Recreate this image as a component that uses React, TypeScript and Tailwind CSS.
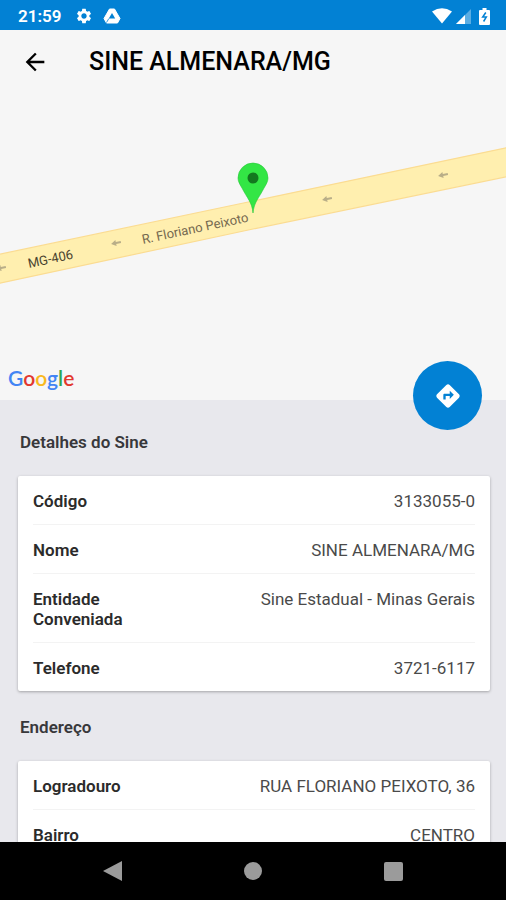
import { MdArrowBack, MdDirections, MdSettings } from "react-icons/md";

type Detail = { label: string; value: string };

const detalhes: Detail[] = [
  { label: "Código", value: "3133055-0" },
  { label: "Nome", value: "SINE ALMENARA/MG" },
  { label: "Entidade Conveniada", value: "Sine Estadual - Minas Gerais" },
  { label: "Telefone", value: "3721-6117" },
];

const endereco: Detail[] = [
  { label: "Logradouro", value: "RUA FLORIANO PEIXOTO, 36" },
  { label: "Bairro", value: "CENTRO" },
];

const roadArrows = [
  { x: 1, y: 174 },
  { x: 116, y: 149 },
  { x: 327, y: 105 },
  { x: 443, y: 81 },
];

function StatusBar() {
  return (
    <div className="flex h-[30px] shrink-0 items-center bg-[#0281d4] px-4 pt-0.5 text-white">
      <span className="ml-0.5 text-[17px] leading-5 font-semibold">21:59</span>
      <MdSettings className="ml-3.5 h-[18px] w-[18px]" />
      <svg viewBox="0 0 18 16" className="ml-2.5 h-4 w-[18px]" aria-hidden="true">
        <path
          d="M6.500 1h5l5.500 9.500-2.500 4.500h-11L1 10.500z"
          fill="currentColor"
          stroke="currentColor"
          strokeLinejoin="round"
        />
        <path d="M9 5l3.200 5.600H5.800z" fill="#0281d4" />
        <path d="M3.500 14.500l2.300-3.900" stroke="#0281d4" strokeWidth="0.8" />
      </svg>
      <div className="ml-auto flex items-center gap-1">
        <svg viewBox="0 0 20 16" className="h-4 w-5" aria-hidden="true">
          <path d="M0 3.500Q10-3 20 3.500L10 15.500z" fill="currentColor" />
        </svg>
        <svg viewBox="0 0 15 15" className="h-[15px] w-[15px]" aria-hidden="true">
          <path d="M15 0v15H0z" fill="currentColor" opacity="0.35" />
          <path d="M9 6v9H0z" fill="currentColor" />
        </svg>
        <svg viewBox="0 0 11 17" className="ml-1 h-[17px] w-[11px]" aria-hidden="true">
          <path
            d="M3.500 0h4v2H10a1 1 0 0 1 1 1v13a1 1 0 0 1-1 1H1a1 1 0 0 1-1-1V3a1 1 0 0 1 1-1h2.500z"
            fill="currentColor"
          />
          <path
            d="M6.800 4.500L3.700 9h3.600L4.600 13.500"
            fill="none"
            stroke="#0281d4"
            strokeWidth="1.5"
          />
        </svg>
      </div>
    </div>
  );
}

function MapView() {
  return (
    <div className="relative h-[306px] shrink-0 bg-[#f6f6f6]">
      <svg
        viewBox="0 0 506 306"
        preserveAspectRatio="xMidYMid slice"
        className="h-full w-full"
        role="img"
        aria-label="Mapa"
      >
        <path
          d="M-4 161L253 107 510 53V82L253 135-4 190z"
          fill="#ffefaf"
          stroke="#fbdc92"
          strokeWidth="1.2"
        />
        {roadArrows.map((a) => (
          <g key={a.x} transform={`translate(${a.x} ${a.y}) rotate(-12)`}>
            <path d="M-5 0L0-3v2h5v2H0v2z" fill="#b9ae88" />
          </g>
        ))}
        <g fontFamily="Roboto, sans-serif" fontSize="13">
          <text transform="translate(29 174) rotate(-12)" fill="#4a442f">
            MG-406
          </text>
          <text transform="translate(143 150) rotate(-12)" fill="#75694f">
            R. Floriano Peixoto
          </text>
        </g>
        <path
          d="M253 119C252 108 247 104 242 94 239.500 90 238 87 238 84a15 15 0 0 1 30 0c0 3-1.500 6-4 10C259 104 254 108 253 119z"
          fill="#33e645"
          stroke="#25c838"
          strokeWidth="0.6"
        />
        <circle cx="253" cy="84" r="5.500" fill="#13781f" />
      </svg>
      <span
        aria-label="Google"
        className="absolute bottom-2 left-2 font-[Lato,sans-serif] text-[21px] leading-7 font-semibold"
      >
        <span className="text-[#4285f4]">G</span>
        <span className="text-[#e2382f]">o</span>
        <span className="text-[#f9b820]">o</span>
        <span className="text-[#4285f4]">g</span>
        <span className="text-[#2fa650]">l</span>
        <span className="text-[#e2382f]">e</span>
      </span>
      <button
        type="button"
        aria-label="Traçar rota"
        className="absolute right-6 -bottom-[30px] flex h-[69px] w-[69px] items-center justify-center rounded-full bg-[#0281d4] text-white"
      >
        <MdDirections className="h-7 w-7" />
      </button>
    </div>
  );
}

function DetailSection({ title, items }: { title: string; items: Detail[] }) {
  return (
    <section className="pt-[26px] pr-4 pl-[18px]">
      <h2 className="mb-6 px-0.5 text-[17px] leading-5 font-semibold text-[#38383b]">
        {title}
      </h2>
      <dl className="rounded-xs bg-white px-[15px] shadow-[0_1px_3px_rgba(0,0,0,0.3)]">
        {items.map((item) => (
          <div
            key={item.label}
            className="flex justify-between gap-4 border-b border-[#f3f3f3] pt-[15px] pb-[13px] text-[17px] leading-5 last:border-b-0"
          >
            <dt className="max-w-[120px] font-semibold text-[#2b2b2b]">{item.label}</dt>
            <dd className="text-right text-[#4a4a4a]">{item.value}</dd>
          </div>
        ))}
      </dl>
    </section>
  );
}

export default function App() {
  return (
    <div className="flex h-screen flex-col overflow-hidden bg-[#e8e8ed] font-[Roboto,sans-serif]">
      <StatusBar />

      <header className="flex h-16 shrink-0 items-center gap-10 bg-[#f6f6f6] px-[21px]">
        <button type="button" aria-label="Voltar" className="text-black">
          <MdArrowBack className="h-7 w-7" />
        </button>
        <h1 className="text-[25px] leading-8 font-medium text-black">SINE ALMENARA/MG</h1>
      </header>

      <main className="min-h-0 flex-1 overflow-y-auto [scrollbar-width:none]">
        <MapView />
        <div className="pt-1.5 pb-6">
          <DetailSection title="Detalhes do Sine" items={detalhes} />
          <DetailSection title="Endereço" items={endereco} />
        </div>
      </main>

      <nav className="flex h-[58px] shrink-0 items-center justify-center bg-black text-[#9b9b9b]">
        <button type="button" aria-label="Voltar" className="flex w-[140px] justify-center">
          <svg viewBox="0 0 20 20" className="h-5 w-5">
            <path d="M19 0v20L0 10z" fill="currentColor" />
          </svg>
        </button>
        <button type="button" aria-label="Início" className="flex w-[140px] justify-center">
          <span className="h-[18px] w-[18px] rounded-full bg-[#9b9b9b]" />
        </button>
        <button type="button" aria-label="Recentes" className="flex w-[140px] justify-center">
          <span className="h-[19px] w-[19px] rounded-xs bg-[#9b9b9b]" />
        </button>
      </nav>
    </div>
  );
}
